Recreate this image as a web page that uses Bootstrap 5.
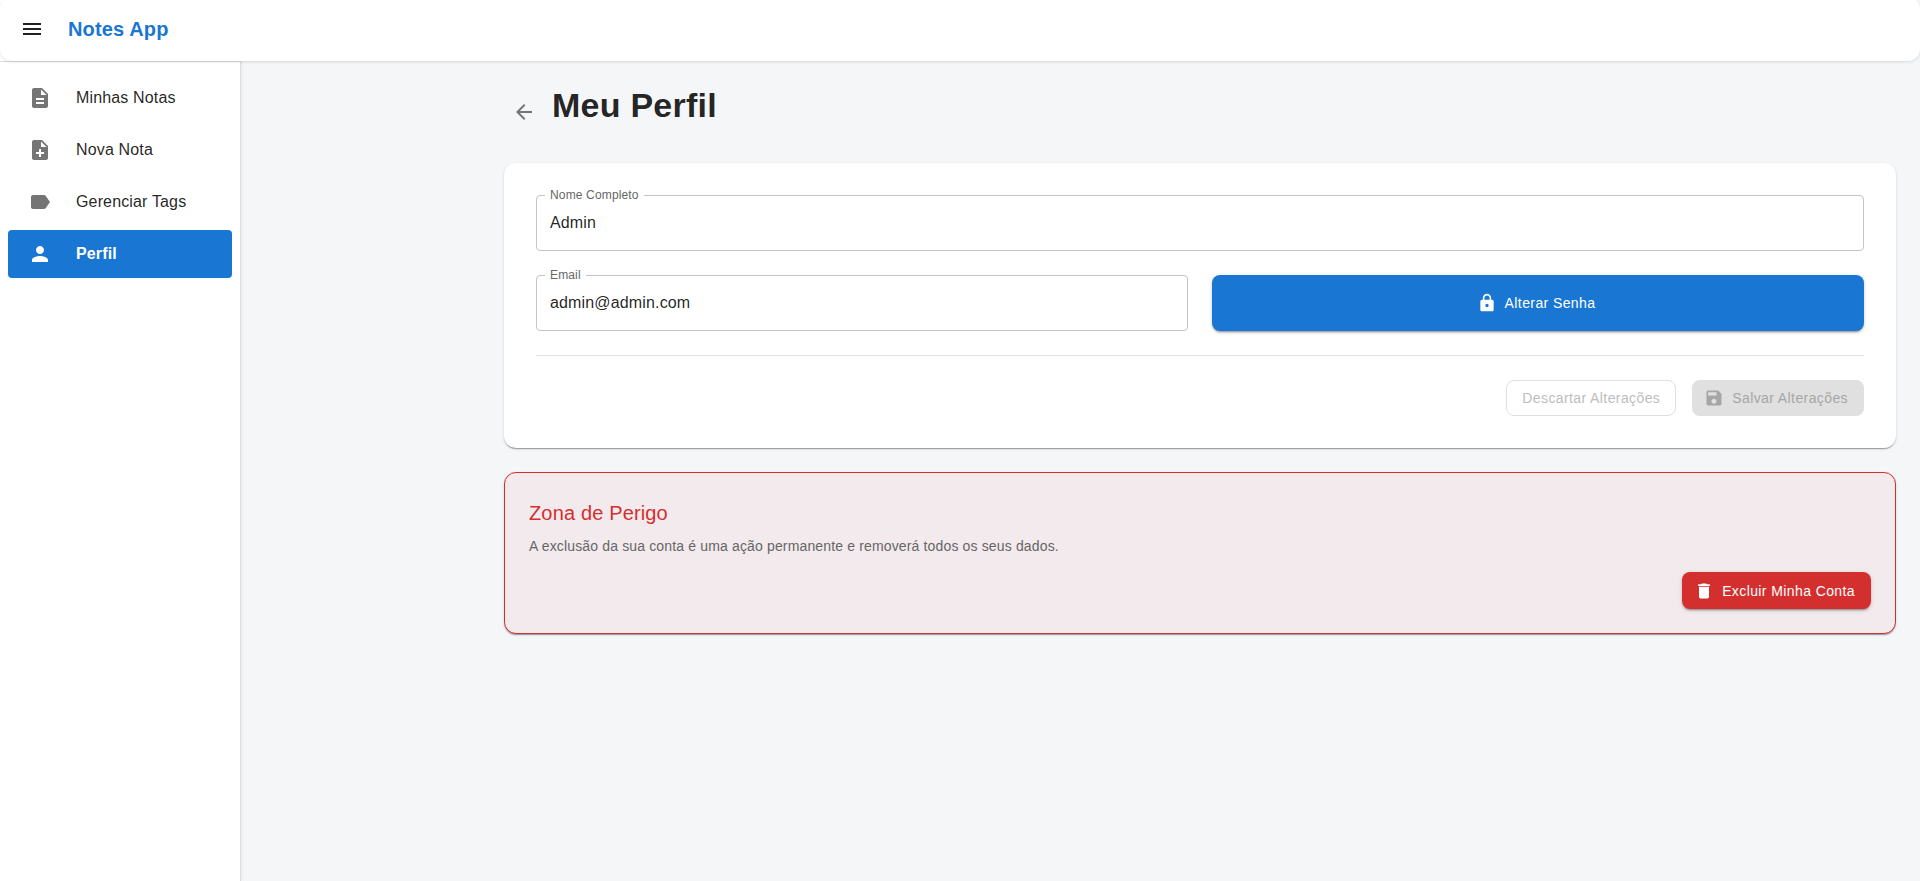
<!DOCTYPE html>
<html lang="pt-BR">
<head>
<meta charset="utf-8">
<meta name="viewport" content="width=device-width, initial-scale=1">
<title>Notes App</title>
<link href="https://cdn.jsdelivr.net/npm/bootstrap@5.3.0/dist/css/bootstrap.min.css" rel="stylesheet">
<style>
body{font-family:"Liberation Sans",Arial,sans-serif;font-size:16px;line-height:1.5;letter-spacing:.00938em;color:rgba(0,0,0,.87);background:#f4f6f8;overflow:hidden}
svg{fill:currentColor;flex:none;display:block}
.topbar{height:64px;margin-top:-3px;padding:0 20px;background:#fff;border-radius:12px;box-shadow:0 1px 3px rgba(0,0,0,.12);z-index:2}
.brand{font-size:20px;line-height:1.6;letter-spacing:.0075em;color:#1976d2;margin-left:24px}
.side{width:241px;border-right:1px solid #dcdddd;background:#fff;margin-top:-61px;padding-top:61px;box-shadow:1px 0 3px rgba(0,0,0,.06)}
.side-list{border-top:1px solid #dcdcdc;padding:12px 8px 0}
.side-link{height:48px;margin-bottom:4px;padding:0 20px;border-radius:4px;color:inherit}
.side-link svg{color:#757575;margin-right:24px}
.side-link.active{background:#1976d2;color:#fff;font-weight:700}
.side-link.active svg{color:#fff}
.content{padding:24px 24px 0 263px}
.head-row{height:54px}
.page-title{font-size:34px;line-height:40px;letter-spacing:.00735em;font-weight:700;margin:0 0 14px}
.back{width:40px;height:40px;color:#757575;margin-right:8px}
.panel{border-radius:12px;box-shadow:0 2px 1px -1px rgba(0,0,0,.2),0 1px 1px rgba(0,0,0,.14),0 1px 3px rgba(0,0,0,.12)}
.panel-form{background:#fff;padding:32px}
.field{height:56px;border:1px solid #c4c4c4;border-radius:4px;padding:15px 13px;line-height:24px}
.field input{letter-spacing:inherit;color:inherit;outline:0;height:24px}
.field label{top:-9px;left:8px;padding:0 5px;background:#fff;font-size:12px;line-height:17px;color:#666}
.act{font-size:14px;line-height:24px;font-weight:500;letter-spacing:.02857em;border-radius:8px;padding:6px 16px;border:0}
.raised{color:#fff;box-shadow:0 3px 1px -2px rgba(0,0,0,.2),0 2px 2px rgba(0,0,0,.14),0 1px 5px rgba(0,0,0,.12)}
.act svg{margin:0 8px 0 -4px}
.act-blue{background:#1976d2;height:56px}
.act-red{background:#d32f2f;height:37px}
.act-outline{border:1px solid #e0e0e0;padding:5px 15px;color:#bdbdbd}
.act-off{background:#e0e0e0;color:#a6a6a6}
.rule{height:1px;background:#e0e0e0;margin:24px 0}
.danger-zone{background:#f3eaed;border:1px solid #d32f2f;padding:24px;margin-top:24px}
.danger-title{font-size:20px;line-height:32px;letter-spacing:.0075em;font-weight:400;color:#d32f2f;margin:0 0 7px}
.danger-text{font-size:14px;line-height:20px;letter-spacing:.01071em;color:#666;margin:0 0 16px}
</style>
</head>
<body>
<div class="d-flex flex-column vh-100">
  <header class="topbar position-relative d-flex align-items-center flex-shrink-0">
    <svg width="24" height="24" viewBox="0 0 24 24"><path d="M3 18h18v-2H3v2zm0-5h18v-2H3v2zm0-7v2h18V6H3z"/></svg>
    <div class="brand fw-bold">Notes App</div>
  </header>
  <div class="d-flex flex-grow-1">
    <aside class="side flex-shrink-0">
      <nav class="side-list d-flex flex-column">
        <a class="side-link d-flex align-items-center text-decoration-none"><svg width="24" height="24" viewBox="0 0 24 24"><path d="M14 2H6c-1.100 0-1.990.9-1.990 2L4 20c0 1.100.890 2 1.990 2H18c1.100 0 2-.9 2-2V8l-6-6zm2 16H8v-2h8v2zm0-4H8v-2h8v2zm-3-5V3.500L18.500 9H13z"/></svg>Minhas Notas</a>
        <a class="side-link d-flex align-items-center text-decoration-none"><svg width="24" height="24" viewBox="0 0 24 24"><path d="M14 2H6c-1.100 0-1.990.9-1.990 2L4 20c0 1.100.890 2 1.990 2H18c1.100 0 2-.9 2-2V8l-6-6zm2 14h-3v3h-2v-3H8v-2h3v-3h2v3h3v2zm-3-7V3.500L18.500 9H13z"/></svg>Nova Nota</a>
        <a class="side-link d-flex align-items-center text-decoration-none"><svg width="24" height="24" viewBox="0 0 24 24"><path d="M17.630 5.840C17.270 5.330 16.670 5 16 5L5 5.010C3.900 5.010 3 5.900 3 7v10c0 1.100.9 1.990 2 1.990L16 19c.670 0 1.270-.330 1.630-.840L22 12l-4.370-6.160z"/></svg>Gerenciar Tags</a>
        <a class="side-link active d-flex align-items-center text-decoration-none"><svg width="24" height="24" viewBox="0 0 24 24"><path d="M12 12c2.210 0 4-1.790 4-4s-1.790-4-4-4-4 1.790-4 4 1.790 4 4 4zm0 2c-2.670 0-8 1.340-8 4v2h16v-2c0-2.660-5.330-4-8-4z"/></svg>Perfil</a>
      </nav>
    </aside>
    <main class="content flex-grow-1">
      <div class="head-row d-flex align-items-center mb-4">
        <div class="back d-flex align-items-center justify-content-center"><svg width="24" height="24" viewBox="0 0 24 24"><path d="M20 11H7.830l5.590-5.590L12 4l-8 8 8 8 1.410-1.410L7.830 13H20v-2z"/></svg></div>
        <h1 class="page-title">Meu Perfil</h1>
      </div>
      <section class="panel panel-form">
        <div class="field position-relative mb-4"><label class="position-absolute" for="nome">Nome Completo</label><input id="nome" class="d-block w-100 border-0 p-0 bg-transparent" value="Admin"></div>
        <div class="row gx-4">
          <div class="col-6"><div class="field position-relative"><label class="position-absolute" for="email">Email</label><input id="email" class="d-block w-100 border-0 p-0 bg-transparent" value="admin@admin.com"></div></div>
          <div class="col-6"><button class="act raised act-blue w-100 d-flex align-items-center justify-content-center"><svg width="20" height="20" viewBox="0 0 24 24"><path d="M18 8h-1V6c0-2.760-2.240-5-5-5S7 3.240 7 6v2H6c-1.100 0-2 .9-2 2v10c0 1.100.9 2 2 2h12c1.100 0 2-.9 2-2V10c0-1.100-.9-2-2-2zm-6 9c-1.100 0-2-.9-2-2s.9-2 2-2 2 .9 2 2-.9 2-2 2zm3.100-9H8.900V6c0-1.710 1.390-3.100 3.100-3.100 1.710 0 3.100 1.390 3.100 3.100v2z"/></svg>Alterar Senha</button></div>
        </div>
        <div class="rule"></div>
        <div class="d-flex justify-content-end gap-3">
          <button class="act act-outline bg-transparent" disabled>Descartar Alterações</button>
          <button class="act act-off d-flex align-items-center" disabled><svg width="20" height="20" viewBox="0 0 24 24"><path d="M17 3H5c-1.110 0-2 .9-2 2v14c0 1.100.890 2 2 2h14c1.100 0 2-.9 2-2V7l-4-4zm-5 16c-1.660 0-3-1.340-3-3s1.340-3 3-3 3 1.340 3 3-1.340 3-3 3zm3-10H5V5h10v4z"/></svg>Salvar Alterações</button>
        </div>
      </section>
      <section class="panel danger-zone">
        <h2 class="danger-title">Zona de Perigo</h2>
        <p class="danger-text">A exclusão da sua conta é uma ação permanente e removerá todos os seus dados.</p>
        <div class="d-flex justify-content-end">
          <button class="act raised act-red d-flex align-items-center"><svg width="20" height="20" viewBox="0 0 24 24"><path d="M6 19c0 1.100.9 2 2 2h8c1.100 0 2-.9 2-2V7H6v12zM19 4h-3.500l-1-1h-5l-1 1H5v2h14V4z"/></svg>Excluir Minha Conta</button>
        </div>
      </section>
    </main>
  </div>
</div>
<script src="https://cdn.jsdelivr.net/npm/bootstrap@5.3.0/dist/js/bootstrap.bundle.min.js"></script>
</body>
</html>
